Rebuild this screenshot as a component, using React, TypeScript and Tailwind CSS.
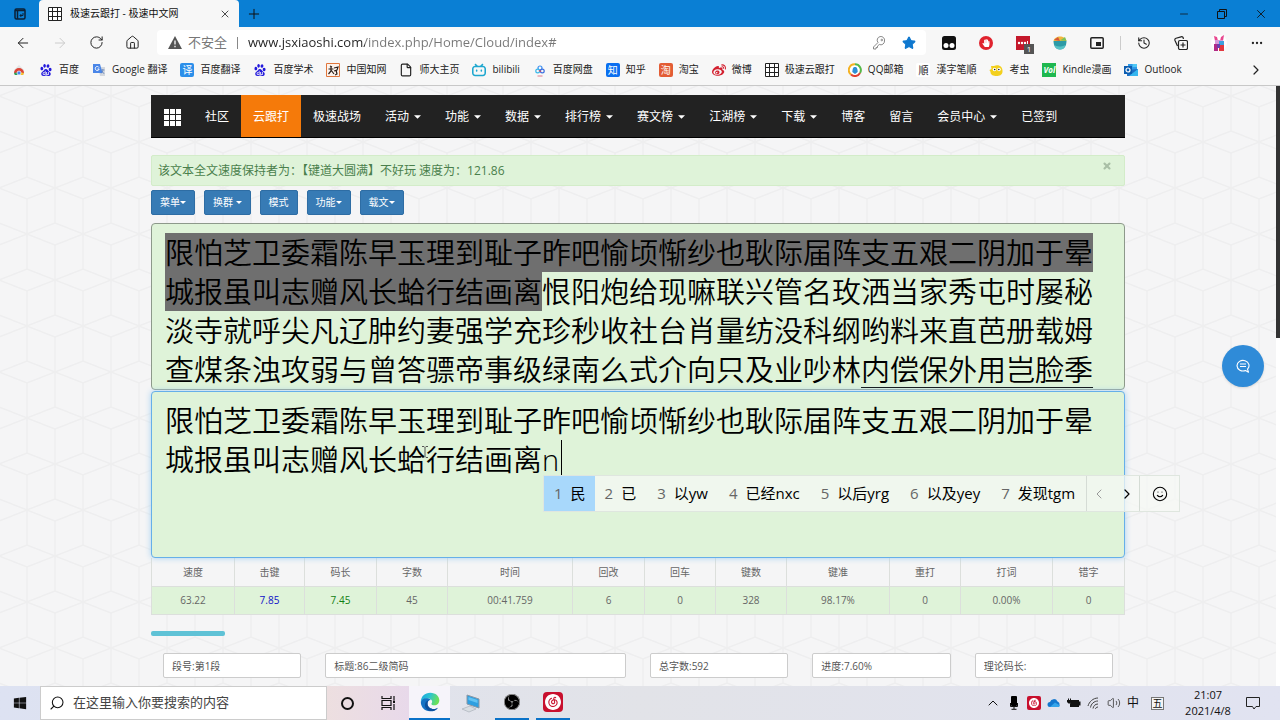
import React from 'react';
import {
  ArrowLeft, ArrowRight, RotateCw, House, Star, History, Ellipsis,
  X, Plus, Minus, ChevronRight, ChevronLeft, ChevronUp, File, Smile, Search,
  Volume2,
} from 'lucide-react';
import { SiBaidu, SiBilibili, SiSinaweibo, SiNeteasecloudmusic, SiObsstudio } from 'react-icons/si';
import { FaWindows, FaHandPaper } from 'react-icons/fa';

const DONE_TEXT = '限怕芝卫委霜陈早玉理到耻子昨吧愉顷惭纱也耿际届阵支五艰二阴加于晕城报虽叫志赠风长蛤行结画离';
const TODO_TEXT = '恨阳炮给现嘛联兴管名玫洒当家秀屯时屡秘淡寺就呼尖凡辽肿约妻强学充珍秒收社台肖量纺没科纲哟料来直芭册载姆查煤条浊攻弱与曾答骠帝事级绿南么式介向只及业吵林';
const NEXT_TEXT = '内偿保外用岂脸季';

const GridIcon: React.FC = () => (
  <svg viewBox="0 0 14 14" className="size-3.5 bg-white" fill="none" stroke="#222" strokeWidth="1">
    <path d="M.5.5h13v13H.5zM4.5.5v13M9.5.5v13M.5 4.5h13M.5 9.5h13" />
  </svg>
);

const Tile: React.FC<{ text: string; className: string }> = ({ text, className }) => (
  <span className={`flex size-3.5 items-center justify-center rounded-xs text-[10px] leading-none ${className}`}>{text}</span>
);

const EdgeIcon: React.FC = () => (
  <svg viewBox="0 0 24 24" className="size-5">
    <defs>
      <linearGradient id="edgeTop" x1="0" y1="0" x2="1" y2="0.3">
        <stop offset="0" stopColor="#1ba5e0" />
        <stop offset="0.5" stopColor="#2bc3d2" />
        <stop offset="1" stopColor="#6be05a" />
      </linearGradient>
    </defs>
    <path d="M1 12C1 5 6 .8 12.300.8 19 .8 23.200 5.200 23.200 10c0 3.700-2.700 6-5.900 6-2.300 0-3.600-.8-3.600-1.700 0-.6.9-1 .9-2.500 0-2-1.900-3.900-4.800-3.900C5.500 7.900 2 9.700 1 12z" fill="url(#edgeTop)" />
    <path d="M1 12c.8-3.200 4.300-5.200 8-4.500 2 .4 3.500 1.300 4.200 2.300-2-.6-4.200 1-4.200 4 0 4 3.500 6.600 7.300 6.600 2.200 0 3.900-.8 5.200-1.600C19.700 21.600 16 23.400 12 23.200 5.500 23 1 18.200 1 12z" fill="#1472c4" />
    <path d="M9 13.800c0 4 3.500 6.600 7.300 6.600 2.200 0 3.900-.8 5.200-1.600-2 3.200-6.500 4.800-10.500 3.700-4-1.400-6-5-4.700-9 .7-2 3-4 5.700-4.300C10 9.800 9 11.500 9 13.800z" fill="#0d4f9c" />
  </svg>
);

const bookmarks: { label: string; icon: React.ReactNode }[] = [
  {
    label: '',
    icon: (
      <svg viewBox="0 0 14 14" className="size-3.5">
        <path d="M2 7l5-5 5 5v5H2z" fill="#e4e4e4" />
        <path d="M2 10a5 5 0 0 1 10 0z" fill="#dc4437" />
        <path d="M2 10a5 5 0 0 0 1 2h3l1-3z" fill="#2f9e55" />
        <path d="M12 10a5 5 0 0 1-1 2H7V9z" fill="#f5c02c" />
        <circle cx="7" cy="10" r="2" fill="#4285f4" stroke="#fff" strokeWidth=".7" />
      </svg>
    ),
  },
  { label: '百度', icon: <SiBaidu className="size-3 text-[#2319dc]" /> },
  {
    label: 'Google 翻译',
    icon: (
      <svg viewBox="0 0 14 14" className="size-3.5">
        <path d="M6 4h7v9H8z" fill="#d4d8de" />
        <path d="M1 1h7l2.500 9H1z" fill="#4a86e8" />
        <path d="M7 4.500A2 2 0 1 0 7.200 6H5.500" stroke="#fff" fill="none" />
        <path d="M9 7h3.500M10.800 6v1c0 2-1 3-2 3.500M10 8l2.200 3" stroke="#5f7fb8" strokeWidth=".7" fill="none" />
      </svg>
    ),
  },
  { label: '百度翻译', icon: <Tile text="译" className="bg-[#2c8fea] text-white" /> },
  { label: '百度学术', icon: <SiBaidu className="size-3 text-[#2319dc]" /> },
  {
    label: '中国知网',
    icon: (
      <svg viewBox="0 0 14 14" className="size-3.5" fill="none" stroke="#2b211c">
        <path d="M.5.5h13v13H.5z" fill="#fdf3ec" stroke="#e0763c" />
        <path d="M4 3l2 1M2.500 6h5M5 3v5l-2.500 3M5 7l3 4M8 5l4-1-1 3-3 1M10 7l1 4-2 1" strokeWidth="1.200" />
      </svg>
    ),
  },
  { label: '师大主页', icon: <File className="size-3.5 text-[#222]" strokeWidth={2} /> },
  { label: 'bilibili', icon: <SiBilibili className="size-3.5 text-[#1ea7cf]" /> },
  {
    label: '百度网盘',
    icon: (
      <svg viewBox="0 0 14 14" className="size-3.5" fill="none" strokeWidth="1.200">
        <circle cx="7" cy="5" r="2" stroke="#3b8ff0" />
        <circle cx="4.700" cy="8" r="1.900" stroke="#39b8ea" />
        <circle cx="9.300" cy="8" r="1.900" stroke="#3b6fe0" />
        <path d="M6 7.500l2 1" stroke="#e2415a" />
        <path d="M4.500 13h5" stroke="#e07a8a" strokeWidth="1" />
      </svg>
    ),
  },
  { label: '知乎', icon: <Tile text="知" className="bg-[#0b6ff0] text-white" /> },
  { label: '淘宝', icon: <Tile text="淘" className="bg-[#e35d35] text-white" /> },
  { label: '微博', icon: <SiSinaweibo className="size-3.5 text-[#d3202f]" /> },
  { label: '极速云跟打', icon: <GridIcon /> },
  {
    label: 'QQ邮箱',
    icon: (
      <svg viewBox="0 0 14 14" className="size-3.5" fill="none" strokeWidth="2">
        <circle cx="7" cy="7" r="6" fill="#fff" />
        <path d="M3 11.500A5.800 5.800 0 0 1 7 1.200" stroke="#f4b223" />
        <path d="M7 1.200a5.800 5.800 0 0 1 5 8.800" stroke="#56b848" />
        <path d="M12 10a5.800 5.800 0 0 1-9 1.500" stroke="#e0402f" />
        <path d="M4.300 9c.3-4 1-5 2.700-5s2.500 1 2.700 5L7 11z" fill="#2d8fd6" />
      </svg>
    ),
  },
  { label: '漢字笔順', icon: <Tile text="順" className="bg-white text-[#222]" /> },
  {
    label: '考虫',
    icon: (
      <svg viewBox="0 0 14 14" className="size-3.5">
        <path d="M2 3l3 0c5-2 9 1 8.500 6-.5 3-3 4-6 4s-6-1-6-4c0-1-1-1-1-2l2-1z" fill="#f3d01e" />
        <circle cx="5.500" cy="6.500" r="1.800" fill="#fff" /><circle cx="10" cy="6.500" r="1.800" fill="#fff" />
        <circle cx="5.700" cy="6.500" r=".8" fill="#222" /><circle cx="9.800" cy="6.500" r=".8" fill="#222" />
      </svg>
    ),
  },
  { label: 'Kindle漫画', icon: <span className="flex size-3.5 items-center justify-center bg-[#1fb84f] text-[8px] font-bold italic text-white">Vol</span> },
  {
    label: 'Outlook',
    icon: (
      <svg viewBox="0 0 14 14" className="size-3.5">
        <path d="M4 1h9v6H4z" fill="#2f9ae8" /><path d="M8.500 1H13v3H8.500z" fill="#50c8f5" />
        <path d="M3 7l11-1v7H3z" fill="#1b6fc4" /><path d="M14 6v7H5z" fill="#35b6ef" />
        <path d="M0 3h8v8H0z" fill="#0c5db0" /><circle cx="4" cy="7" r="2" fill="none" stroke="#fff" strokeWidth="1.200" />
      </svg>
    ),
  },
];

const navItems = [
  { label: '社区' }, { label: '云跟打', active: true }, { label: '极速战场' },
  { label: '活动', menu: true }, { label: '功能', menu: true }, { label: '数据', menu: true },
  { label: '排行榜', menu: true }, { label: '赛文榜', menu: true }, { label: '江湖榜', menu: true },
  { label: '下载', menu: true }, { label: '博客' }, { label: '留言' },
  { label: '会员中心', menu: true }, { label: '已签到' },
];

const toolButtons = [
  { label: '菜单', menu: true }, { label: '换群 ', menu: true }, { label: '模式', menu: false },
  { label: '功能', menu: true }, { label: '载文', menu: true },
];

const stats = [
  { label: '速度', value: '63.22', col: 'w-[83px]', tone: '' },
  { label: '击键', value: '7.85', col: 'w-[70px]', tone: 'text-[#1010c8]' },
  { label: '码长', value: '7.45', col: 'w-[72px]', tone: 'text-[#128012]' },
  { label: '字数', value: '45', col: 'w-[71px]', tone: '' },
  { label: '时间', value: '00:41.759', col: 'w-[125px]', tone: '' },
  { label: '回改', value: '6', col: 'w-[72px]', tone: '' },
  { label: '回车', value: '0', col: 'w-[71px]', tone: '' },
  { label: '键数', value: '328', col: 'w-[71px]', tone: '' },
  { label: '键准', value: '98.17%', col: 'w-[103px]', tone: '' },
  { label: '重打', value: '0', col: 'w-[71px]', tone: '' },
  { label: '打词', value: '0.00%', col: 'w-[92px]', tone: '' },
  { label: '错字', value: '0', col: 'w-[72px]', tone: '' },
];

const infoFields = [
  { name: '段号', value: '段号:第1段', span: 'col-span-2' },
  { name: '标题', value: '标题:86二级简码', span: 'col-span-4' },
  { name: '总字数', value: '总字数:592', span: 'col-span-2' },
  { name: '进度', value: '进度:7.60%', span: 'col-span-2' },
  { name: '理论码长', value: '理论码长:', span: 'col-span-2' },
];

const candidates = ['民', '已', '以yw', '已经nxc', '以后yrg', '以及yey', '发现tgm'];

const Caret: React.FC<{ small?: boolean }> = ({ small }) => (
  <svg viewBox="0 0 8 4" className={small ? 'h-[3px] w-1.5' : 'h-1 w-[7px]'} fill="currentColor">
    <path d="M0 0h8L4 4z" />
  </svg>
);

const TabBar: React.FC = () => (
  <div className="flex h-[27px] items-stretch bg-[#0a7fd4] text-[#111]">
    <div className="flex w-[39px] items-center justify-center">
      <svg viewBox="0 0 12 12" className="size-3" fill="none" stroke="#0b2036" strokeWidth="1.500">
        <rect x="1" y="1" width="10" height="10" rx="1.500" />
        <path d="M1 2.500h10M3.500 3v8" /><path d="M9 5v2.500H6M7.300 6L6 7.500 7.300 9" strokeWidth="1" />
      </svg>
    </div>
    <div className="flex w-[200px] items-center rounded-t bg-[#f7f7f7] pl-[9px]">
      <GridIcon />
      <span className="ml-2 flex-1 text-[10px]">极速云跟打 - 极速中文网</span>
      <button aria-label="关闭标签页" className="mr-2"><X className="size-3" strokeWidth={1.5} /></button>
    </div>
    <button aria-label="新建标签页" className="px-[7px]"><Plus className="size-4" strokeWidth={1.5} /></button>
    <div className="ml-auto flex items-center gap-[26px] pr-3">
      <button aria-label="最小化"><Minus className="size-3" strokeWidth={1.5} /></button>
      <button aria-label="还原">
        <svg viewBox="0 0 12 12" className="size-3" fill="none" stroke="#111">
          <path d="M1.500 3.500h7v7h-7zM3.500 3.500v-2h7v7h-2" />
        </svg>
      </button>
      <button aria-label="关闭"><X className="size-3.5" strokeWidth={1.5} /></button>
    </div>
  </div>
);

const Toolbar: React.FC = () => (
  <div className="flex h-[31px] items-center bg-[#f7f7f7] pr-4 text-[#222]">
    <div className="flex w-[157px] items-center gap-[21px] pl-[15px]">
      <button aria-label="后退"><ArrowLeft className="size-4" strokeWidth={1.5} /></button>
      <button aria-label="前进"><ArrowRight className="size-4 text-[#ccc]" strokeWidth={1.5} /></button>
      <button aria-label="刷新"><RotateCw className="size-[15px]" strokeWidth={1.6} /></button>
      <button aria-label="主页"><House className="size-[15px]" strokeWidth={1.6} /></button>
    </div>
    <div className="flex h-[25px] flex-1 items-center rounded bg-white pr-2.5 pl-[11px] text-[13px]">
      <svg viewBox="0 0 14 13" className="h-[13px] w-3.5">
        <path d="M7 0l7 13H0z" fill="#555" />
        <path d="M7 4.500v4M7 9.800v1.500" stroke="#fff" strokeWidth="1.300" />
      </svg>
      <span className="ml-1.5 text-[#777]">不安全</span>
      <span className="mr-2.5 ml-2.5 h-3 w-px bg-[#888]" />
      <input
        aria-label="地址"
        className="min-w-0 flex-1 bg-[linear-gradient(to_right,#222_117px,#777_117px)] bg-clip-text text-transparent outline-none"
        defaultValue="www.jsxiaoshi.com/index.php/Home/Cloud/index#"
      />
      <button aria-label="密码">
        <svg viewBox="0 0 14 14" className="size-3.5" fill="none" stroke="#888" strokeWidth="1">
          <path d="M12.500 5A3.700 3.700 0 1 0 6 6.500L1.500 11v2H4v-1.500h1.500V10l1.800-1.500A3.700 3.700 0 0 0 12.500 5z" />
          <circle cx="9.800" cy="4" r=".8" />
        </svg>
      </button>
      <button aria-label="收藏" className="ml-4"><Star className="size-3.5 fill-[#0f78cf] text-[#0f78cf]" /></button>
    </div>
    <div className="flex items-center gap-[23px] pl-4">
      <svg viewBox="0 0 14 14" className="size-3.5">
        <rect width="14" height="14" rx="2.500" fill="#111" />
        <circle cx="4" cy="9.500" r="2.500" fill="#fff" /><circle cx="10" cy="9.500" r="2.500" fill="#fff" />
      </svg>
      <span className="flex size-3.5 items-center justify-center rounded-full bg-[#e0232e]">
        <FaHandPaper className="size-2 text-white" />
      </span>
      <span className="relative flex size-3.5 items-center justify-center bg-[#c4182b]">
        <svg viewBox="0 0 14 14" className="size-3.5" fill="#fff">
          <circle cx="3" cy="7" r="1.200" /><circle cx="6" cy="7" r="1.200" /><circle cx="9" cy="7" r="1.200" />
          <path d="M11 5h1v4h-1z" />
        </svg>
        <span className="absolute top-2 left-2 flex size-2.5 items-center justify-center bg-[#555] text-[8px] leading-none text-white">1</span>
      </span>
      <svg viewBox="0 0 14 14" className="size-3.5">
        <path d="M.5 5C1 2 4 .5 7 .5S13 2 13.500 5z" fill="#f3b73c" />
        <path d="M1 4l4-3 2 4z" fill="#d5573b" />
        <path d="M7 4.500L12 1l1.500 4z" fill="#7dc15a" />
        <path d="M.5 5h13c0 5-2.500 8.500-6.500 8.500S.5 10 .5 5z" fill="#2d9aa6" />
        <path d="M7 13.500c-3 0-5-2-6-5 2 2 6 3 11.500.500-1 3-2.500 4.500-5.500 4.500z" fill="#56c2c6" />
      </svg>
      <svg viewBox="0 0 14 12" className="h-3 w-3.5">
        <rect x=".8" y=".8" width="12.400" height="10.400" rx="1" fill="none" stroke="#222" strokeWidth="1.500" />
        <path d="M6 5h5v4H6z" fill="#222" />
      </svg>
    </div>
    <div className="ml-4 h-3.5 w-px bg-[#ccc]" />
    <div className="flex items-center gap-[23px] pl-4">
      <button aria-label="历史记录"><History className="size-3.5" strokeWidth={1.8} /></button>
      <button aria-label="集锦">
        <svg viewBox="0 0 14 14" className="size-3.5" fill="none" stroke="#222" strokeWidth="1.200">
          <rect x="4.500" y="4.500" width="9" height="9" rx="1.500" />
          <path d="M9 6.500v5M6.500 9h5M3.500 10L1 4.500C.6 3.500 1 2.500 2 2.200L7 .8c1-.3 2 .2 2.300 1.200v1" />
        </svg>
      </button>
      <svg viewBox="0 0 16 16" className="size-4">
        <circle cx="8" cy="8" r="8" fill="#fff" />
        <path d="M3 1l3 1 1 4H4zM13 0l-3 2-1 4h3z" fill="#e7478f" />
        <path d="M4 5h8v5H4z" fill="#d79ad9" /><path d="M3 9l4 0v7H3z" fill="#b12a86" />
        <path d="M8 6h5v4H8z" fill="#3da1e0" /><path d="M8 10h5v6H8z" fill="#e2383f" />
        <path d="M6 9h3v4H6z" fill="#6b3fae" />
      </svg>
      <button aria-label="设置及其他"><Ellipsis className="size-3.5" /></button>
    </div>
  </div>
);

const BookmarkBar: React.FC = () => (
  <div className="flex h-7 items-center gap-[13px] border-b border-[#c8c8c8] bg-[#f7f7f7] pr-4 pb-1 pl-3 text-[10px] text-[#222]">
    {bookmarks.map((b, i) => (
      <a key={i} href="#" aria-label={b.label || '应用'} className="flex shrink-0 items-center gap-1.5 whitespace-nowrap">
        <span className="flex w-3.5 justify-center">{b.icon}</span>
        {b.label && <span>{b.label}</span>}
      </a>
    ))}
    <button aria-label="更多收藏" className="ml-auto"><ChevronRight className="size-4" strokeWidth={1.8} /></button>
  </div>
);

const Backdrop: React.FC = () => (
  <svg className="absolute inset-0 size-full" aria-hidden="true">
    <defs>
      <pattern id="cubes" x="223" y="10" width="56" height="92" patternUnits="userSpaceOnUse">
        <path
          d="M0 0L28 -11L56 0L28 11ZM28 11V46M0 0V35M56 0V35M0 35L28 46L56 35M0 57L28 46L56 57M0 57V92M56 57V92M28 46V81M0 92L28 81L56 92L28 103Z"
          fill="none" stroke="#eeeeef" strokeWidth="1.500"
        />
      </pattern>
    </defs>
    <rect width="100%" height="100%" fill="url(#cubes)" />
  </svg>
);

const SiteNav: React.FC = () => (
  <nav className="flex h-[43px] items-stretch border-b border-black bg-[#222] text-xs text-white">
    <a href="#" aria-label="首页" className="flex w-[42px] items-center justify-center pt-0.5">
      <svg viewBox="0 0 17 17" className="size-[17px]" fill="#fff">
        <path d="M0 0h5v5H0zM6 0h5v5H6zM12 0h5v5h-5zM0 6h5v5H0zM6 6h5v5H6zM12 6h5v5h-5zM0 12h5v5H0zM6 12h5v5H6zM12 12h5v5h-5z" />
      </svg>
    </a>
    {navItems.map((item) => (
      <a key={item.label} href="#" className={`flex items-center gap-[5px] px-3 pt-0.5 ${item.active ? 'bg-[#f57a0a]' : ''}`}>
        {item.label}
        {item.menu && <Caret />}
      </a>
    ))}
  </nav>
);

const ImeBar: React.FC = () => (
  <div className="absolute top-[84px] left-[392px] z-10 flex h-[37px] items-stretch border border-[#dfe6df] bg-[#f5f8f4]/75 text-[15px] whitespace-nowrap text-black">
    {candidates.map((word, i) => (
      <button key={word} className={`flex items-center gap-2 pl-2.5 ${i === 0 ? 'bg-[#a8d8fb] pr-[9px]' : 'pr-[11px]'}`}>
        <span className="text-[#666]">{i + 1}</span>
        <span>{word}</span>
      </button>
    ))}
    <div className="flex w-[53px] items-center justify-between border-l border-[#d5dcd5] px-1">
      <button aria-label="上一页"><ChevronLeft className="size-4 text-[#999]" strokeWidth={1.5} /></button>
      <button aria-label="下一页"><ChevronRight className="size-4" strokeWidth={1.8} /></button>
    </div>
    <button aria-label="表情" className="flex w-10 items-center justify-center border-l border-[#d5dcd5]">
      <Smile className="size-4" strokeWidth={1.6} />
    </button>
  </div>
);

const StatsTable: React.FC = () => (
  <table className="w-full table-fixed border-collapse text-center text-[10px] text-[#666]">
    <thead>
      <tr className="h-7 bg-[#f5f5f6]">
        {stats.map((s) => (
          <th key={s.label} className={`border border-t-0 border-[#dcdfdc] pt-px font-normal ${s.col}`}>{s.label}</th>
        ))}
      </tr>
    </thead>
    <tbody>
      <tr className="h-7 bg-[#dff3d9]">
        {stats.map((s) => (
          <td key={s.label} className={`border border-[#dcdfdc] ${s.tone}`}>{s.value}</td>
        ))}
      </tr>
    </tbody>
  </table>
);

const Taskbar: React.FC = () => (
  <footer className="flex h-[34px] shrink-0 items-stretch bg-linear-to-r from-[#dde2f2] via-[#e2e3e8] to-[#e1e3f1] text-[#111]">
    <button aria-label="开始" className="flex w-10 items-center justify-center"><FaWindows className="size-3.5" /></button>
    <label className="flex w-[287px] items-center gap-2 border border-[#ccc] bg-white pl-2">
      <Search className="size-4 -scale-x-100" strokeWidth={1.6} />
      <input
        aria-label="搜索"
        placeholder="在这里输入你要搜索的内容"
        className="min-w-0 flex-1 text-[13px] outline-none placeholder:text-[#444]"
      />
    </label>
    <div className="flex w-[82px] items-center justify-around bg-linear-to-r from-[#eddfe0] to-[#e8d9ea]">
      <button aria-label="Cortana" className="size-[13px] rounded-full border-2 border-[#111]" />
      <button aria-label="任务视图">
        <svg viewBox="0 0 15 14" className="h-3.5 w-[15px]" fill="none" stroke="#111" strokeWidth="1.200">
          <path d="M1 0v2.500h9V0M1 14v-2.500h9V14M1 4.500h9v5H1zM13 0v4M13 8v6" />
          <path d="M12 4.500h2v2.500h-2z" fill="#111" stroke="none" />
        </svg>
      </button>
    </div>
    <button aria-label="Edge" className="flex w-[41px] items-center justify-center border-b-2 border-[#0a72c8] bg-[#f6f4fa]"><EdgeIcon /></button>
    <button aria-label="此电脑" className="flex w-[42px] items-center justify-center">
      <svg viewBox="0 0 20 20" className="size-5">
        <path d="M6 2l12 4v9L6 11z" fill="#2f9fe0" stroke="#8b98a5" />
        <path d="M7.500 4l9 3v3l-9-3z" fill="#63c3f2" />
        <path d="M1 16l8-3 6 3-7 3z" fill="#d8dde2" stroke="#aab2ba" strokeWidth=".7" />
      </svg>
    </button>
    <button aria-label="OBS" className="mx-[3px] flex w-[34px] items-center justify-center border-b-2 border-[#0a72c8]">
      <span className="flex size-4 items-center justify-center rounded-full bg-black"><SiObsstudio className="size-4 text-[#aaa]" /></span>
    </button>
    <button aria-label="网易云音乐" className="mx-1 flex w-[34px] items-center justify-center border-b-2 border-[#0a72c8]">
      <span className="flex size-5 items-center justify-center rounded bg-[#c8102e]"><SiNeteasecloudmusic className="size-4 text-white" /></span>
    </button>
    <div className="ml-auto flex items-center gap-1.5">
      <ChevronUp className="size-4" strokeWidth={1.5} />
      <svg viewBox="0 0 14 14" className="size-3.5">
        <rect x="4" y="0" width="6" height="10" rx="1" /><path d="M3.500 7v3.500h7V7M7 10v3M4.500 13.300h5" fill="none" stroke="#111" />
      </svg>
      <span className="flex size-3.5 items-center justify-center rounded-xs bg-[#c8102e]"><SiNeteasecloudmusic className="size-2.5 text-white" /></span>
      <svg viewBox="0 0 14 10" className="h-2.5 w-3.5">
        <path d="M3 9a2.500 2.500 0 0 1 0-5 4 4 0 0 1 7.500-.5A3 3 0 0 1 11 9z" fill="#1377ce" />
        <path d="M3 9l5-4.500 5 3A2 2 0 0 1 11.500 9z" fill="#35a4ea" />
      </svg>
      <svg viewBox="0 0 14 10" className="h-2.5 w-3.5" fill="#111">
        <path d="M4 2h8v1.500h1.500v4H12V9H3V6z" /><path d="M0 2h1V.500h1V2h1V.500h1V2h.5v2L3 5.500H1.500L0 4z" />
      </svg>
      <svg viewBox="0 0 14 14" className="size-3.5" fill="none" stroke="#444" strokeWidth="1">
        <path d="M1 10C2 6 6 2 11 2M3.500 11.500C4 8 7 5 11 5M6 12.500c.5-2.500 2-4.500 5-4.500M8.500 13c0-1 1-2 2.500-2" />
      </svg>
      <Volume2 className="size-3.5 text-[#444]" strokeWidth={1.5} />
      <span className="text-xs">中</span>
      <span className="mx-1.5 flex size-[13px] items-center justify-center border border-[#777] bg-[#f4f4f4] text-[10px] leading-none">五</span>
      <div className="w-16 text-center text-[11px] leading-4">
        <div>21:07</div>
        <div>2021/4/8</div>
      </div>
      <button aria-label="通知" className="mr-5">
        <svg viewBox="0 0 14 14" className="size-3.5" fill="none" stroke="#222">
          <path d="M.5 1.500h13v9H10L8 13l-1.500-2.500h-6z" />
        </svg>
      </button>
    </div>
  </footer>
);

const App: React.FC = () => (
  <div className="flex h-screen flex-col overflow-hidden font-['Open_Sans','Noto_Sans_CJK_SC',sans-serif]">
    <TabBar />
    <Toolbar />
    <BookmarkBar />
    <div className="flex min-h-0 flex-1">
      <main className="relative flex-1 overflow-hidden bg-[#f5f5f6]">
        <Backdrop />
        <div className="relative mx-auto max-w-[974px] pt-[9px]">
          <SiteNav />

          <div className="mt-[17px] flex h-[31px] items-center justify-between rounded-xs border border-[#d3ecc9] bg-[#dff3d9] pl-1.5 text-xs text-[#4a7f4c]">
            <span>该文本全文速度保持者为：【键道大圆满】不好玩 速度为：121.86</span>
            <button aria-label="关闭" className="mr-3 mb-2.5"><X className="size-2.5 text-[#a9bfa6]" strokeWidth={5} /></button>
          </div>

          <div className="mt-1 flex gap-[9px]">
            {toolButtons.map((b) => (
              <button key={b.label} className="flex h-[25px] items-center rounded-xs border border-[#2e6da4] bg-[#377bb5] px-2 text-[10px] whitespace-pre text-white">
                {b.label}
                {b.menu && <Caret small />}
              </button>
            ))}
          </div>

          <div className="mt-2 h-[167px] overflow-hidden rounded border border-[#8d998b] bg-[#dff3d9] px-[13px] pt-[9px] text-[29px] leading-[39px] font-[350] text-black">
            <span className="bg-[#6f6f6f]">{DONE_TEXT}</span>
            {TODO_TEXT}
            <span className="underline decoration-1 underline-offset-[6px]">{NEXT_TEXT}</span>
          </div>

          <div className="relative mt-px">
            <textarea
              aria-label="跟打区"
              spellCheck={false}
              defaultValue={`${DONE_TEXT}n`}
              className="block h-[167px] w-full resize-none overflow-hidden rounded border border-[#66afe9] bg-[#dff3d9] px-[13px] pt-[9px] text-[29px] leading-[39px] font-[350] text-black shadow-[0_0_6px_#a5d0f0] outline-none"
            />
            <span className="absolute top-[49px] left-[410px] h-[35px] w-px bg-black" />
            <svg viewBox="0 0 6 12" className="absolute top-[55px] left-[271px] h-3 w-1.5" fill="none" stroke="#555" strokeWidth="1">
              <path d="M0 .5h2l1 1 1-1h2M3 1.500v9M0 11.500h2l1-1 1 1h2" />
            </svg>
            <ImeBar />
          </div>

          <StatsTable />

          <div className="mt-4 h-[5px] w-[74px] rounded-xs bg-[#5fc2d6]" />

          <div className="mt-4 grid grid-cols-12">
            {infoFields.map((f) => (
              <div key={f.name} className={`px-3 ${f.span}`}>
                <input
                  aria-label={f.name}
                  defaultValue={f.value}
                  className="h-[25px] w-full rounded-xs border border-[#ccc] bg-white px-2 text-[10px] text-[#555]"
                />
              </div>
            ))}
          </div>
        </div>

        <button aria-label="反馈" className="absolute top-[259px] right-3 flex size-[42px] items-center justify-center rounded-full bg-[#2f8bd8] shadow">
          <svg viewBox="0 0 14 14" className="size-3.5" fill="none" stroke="#fff" strokeWidth="1.100">
            <path d="M9.500 11.500A6 5.300 0 1 1 11.500 10.200l1 3z" strokeLinejoin="round" />
            <path d="M4 5h6M4 7.500h6" />
          </svg>
        </button>
      </main>
      <div className="w-1 bg-white"><div className="h-[42%] bg-[#333]" /></div>
    </div>
    <Taskbar />
  </div>
);

export default App;
